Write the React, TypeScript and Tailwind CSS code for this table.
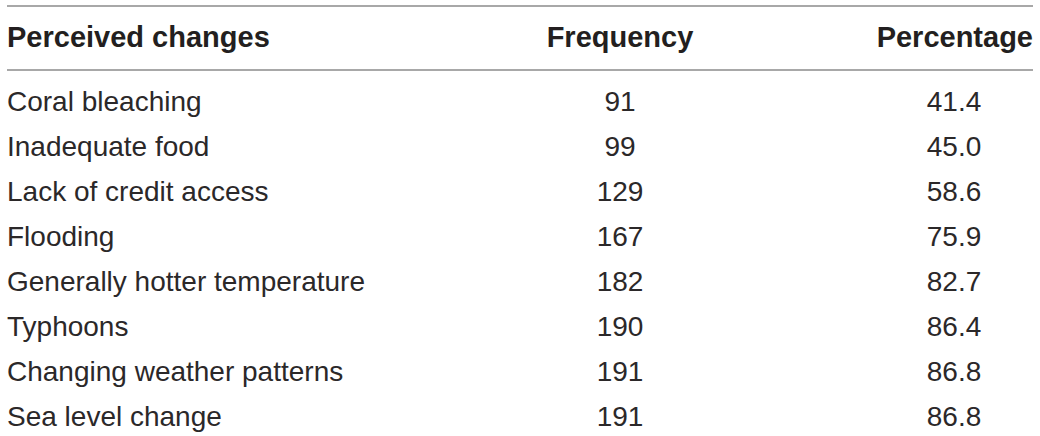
const rows = [
  { label: "Coral bleaching", freq: 91, pct: "41.4" },
  { label: "Inadequate food", freq: 99, pct: "45.0" },
  { label: "Lack of credit access", freq: 129, pct: "58.6" },
  { label: "Flooding", freq: 167, pct: "75.9" },
  { label: "Generally hotter temperature", freq: 182, pct: "82.7" },
  { label: "Typhoons", freq: 190, pct: "86.4" },
  { label: "Changing weather patterns", freq: 191, pct: "86.8" },
  { label: "Sea level change", freq: 191, pct: "86.8" },
];

export default function App() {
  return (
    <div className="h-[436px] w-[1040px] overflow-hidden bg-white pl-[7px] pt-[5px] font-['Liberation_Sans',Arial,sans-serif] text-[#231f20]">
      <div className="w-[1026px]">
        {/* header */}
        <div className="flex border-y-2 border-[#a8a8a8] pb-[12px] pt-[10px] text-[29px] font-bold leading-[40px]">
          <div className="w-[521px]">Perceived changes</div>
          <div className="w-[184px] text-center">Frequency</div>
          <div className="ml-auto w-[158px] text-right">Percentage</div>
        </div>

        {/* body */}
        <div className="pt-[8px] text-[28px] leading-[45px] text-[#2b2829]">
          {rows.map((r) => (
            <div key={r.label} className="flex h-[45px]">
              <div className="w-[521px]">{r.label}</div>
              <div className="w-[184px] text-center">{r.freq}</div>
              <div className="ml-auto w-[158px] text-center">{r.pct}</div>
            </div>
          ))}
        </div>
      </div>
    </div>
  );
}
